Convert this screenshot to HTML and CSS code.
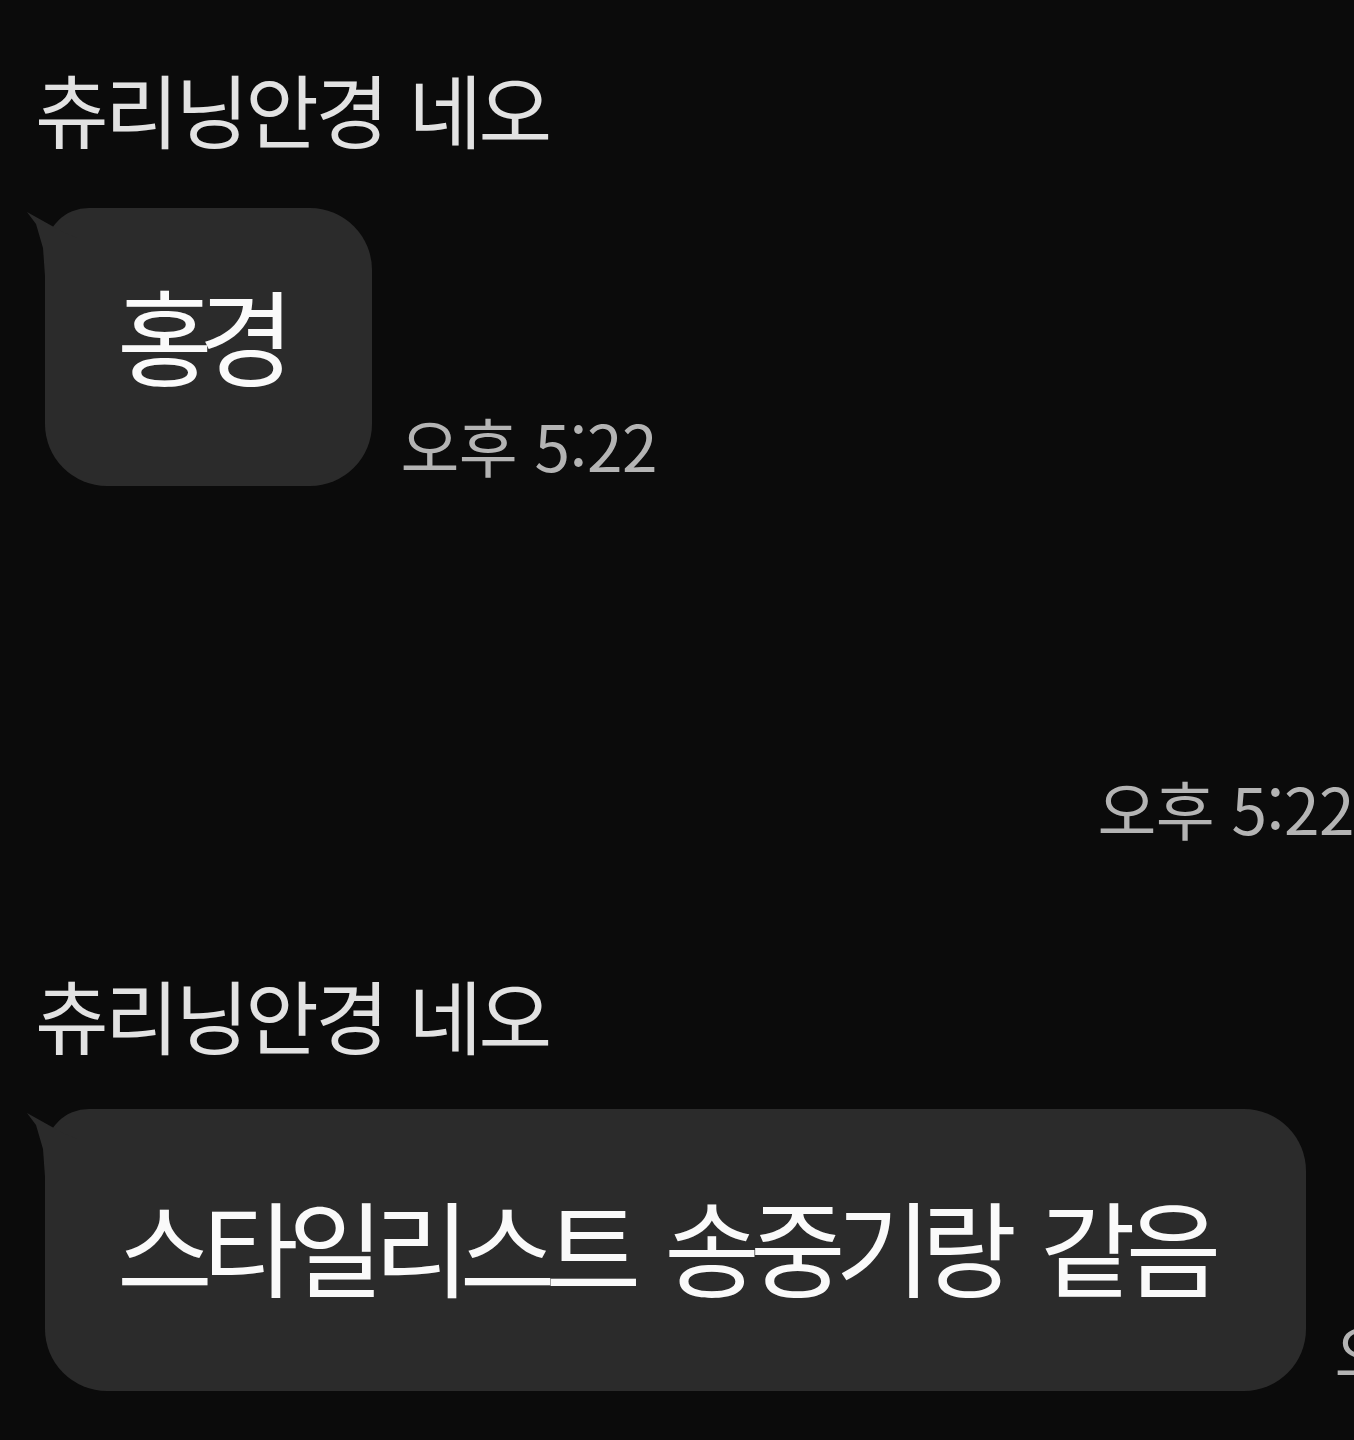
FILE: index.html
```html
<!DOCTYPE html>
<html lang="ko">

<head>
    <meta charset="UTF-8">
    <meta name="viewport" content="width=device-width, initial-scale=1.0">
    <title>채팅</title>
    <link rel="stylesheet" href="styles.css">
</head>

<body>
    <div class="chat">
        <div class="name">츄리닝안경 네오</div>
        <div class="msg-row">
            <div class="bubble">홍경</div>
            <span class="time">오후 5:22</span>
        </div>

        <div class="my-row">
            <span class="time">오후 5:22</span>
        </div>

        <div class="name">츄리닝안경 네오</div>
        <div class="msg-row msg-row-second">
            <div class="bubble bubble-long">스타일리스트 송중기랑 같음</div>
            <span class="time">오후 5:22</span>
        </div>
    </div>
</body>

</html>
```

FILE: styles.css
```css
body {
    margin: 0;
    padding: 0;
    background-color: #0b0b0b;
    font-family: "Noto Sans CJK KR", "Noto Sans", sans-serif;
    overflow: hidden;
    width: 1354px;
    height: 1440px;
}

.chat {
    display: flex;
    flex-direction: column;
    padding-top: 67px;
}

.name {
    margin-left: 35px;
    color: #e2e2e2;
    font-size: 80px;
    line-height: 1;
    letter-spacing: -3.5px;
    word-spacing: 4px;
}

.msg-row {
    display: flex;
    align-items: flex-end;
    margin-left: 45px;
    margin-top: 61px;
    white-space: nowrap;
}

.msg-row-second {
    margin-top: 56px;
}

.bubble {
    position: relative;
    background-color: #2b2b2b;
    color: #fafafa;
    border-radius: 62px;
    border-top-left-radius: 44px;
    font-size: 104px;
    line-height: 1;
    letter-spacing: -14px;
    padding: 74px 92px 100px 72px;
}

.bubble::before {
    content: "";
    position: absolute;
    left: -18px;
    top: 4px;
    width: 50px;
    height: 64px;
    background-color: #2b2b2b;
    clip-path: polygon(0 0, 34px 19px, 50px 26px, 50px 64px, 18px 64px, 16px 36px, 9px 12px);
}

.bubble-long {
    letter-spacing: -10px;
    word-spacing: 14px;
    padding: 84px 95px 94px 72px;
}

.time {
    color: #b4b4b4;
    font-size: 64px;
    line-height: 1;
    letter-spacing: -0.5px;
    margin-left: 28px;
    padding-bottom: 10px;
}

.my-row {
    display: flex;
    justify-content: flex-end;
    margin-right: 0;
    margin-top: 289px;
    margin-bottom: 124px;
}
```
